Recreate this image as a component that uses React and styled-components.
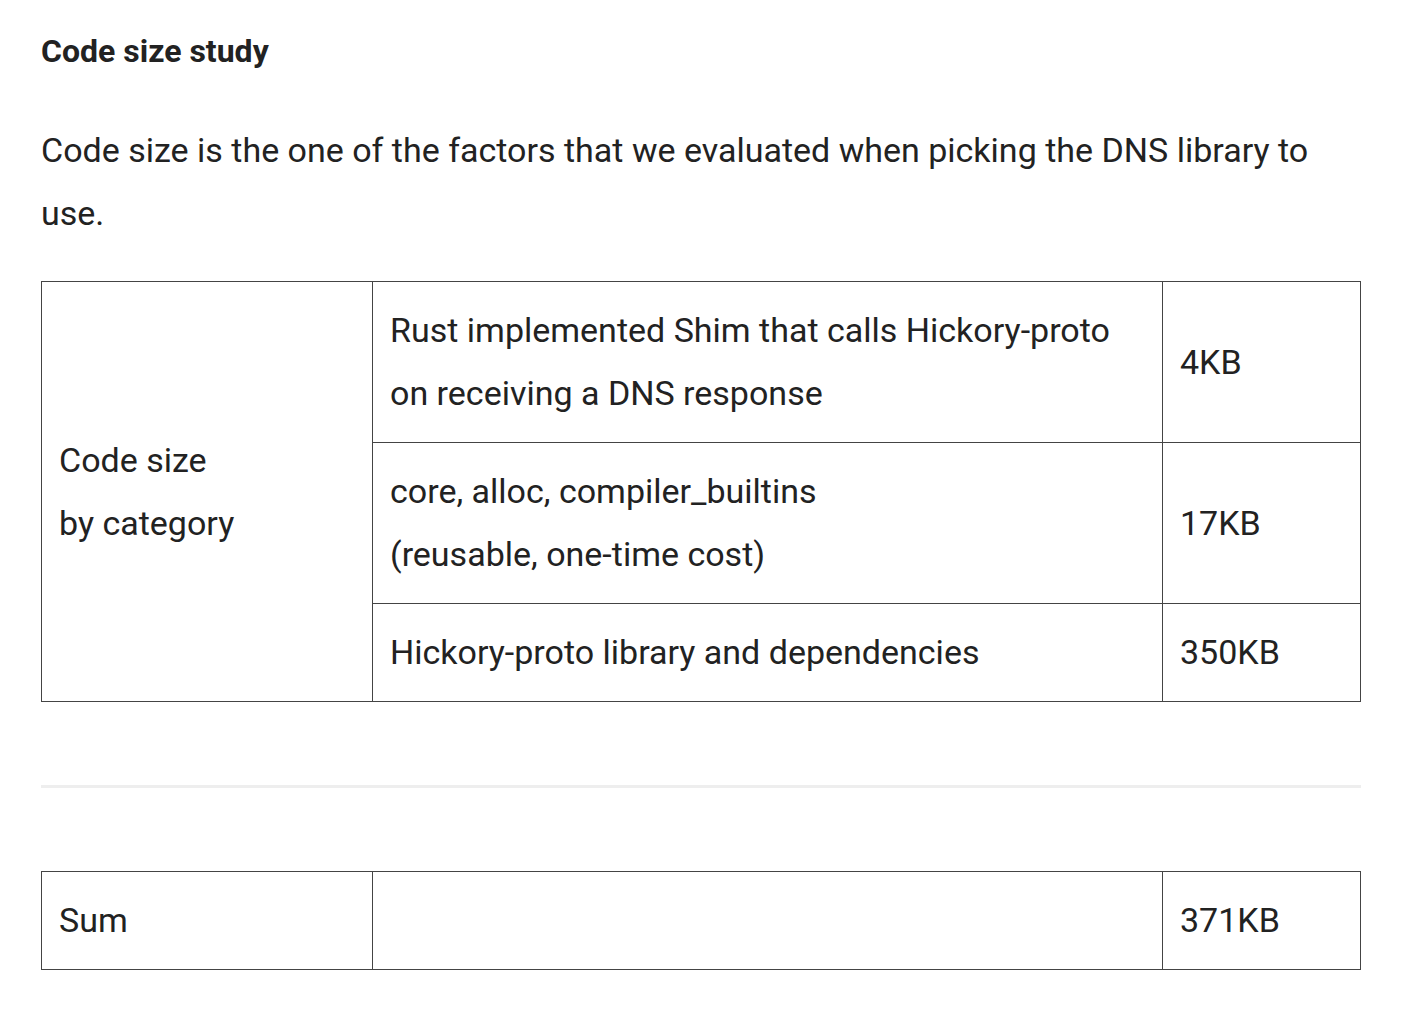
import styled, { createGlobalStyle } from "styled-components";

const GlobalStyle = createGlobalStyle`
  body {
    margin: 0;
    background: #ffffff;
    font-family: Roboto, "Noto Sans", sans-serif;
    color: #222222;
  }
`;

const rows = [
  {
    item: ["Rust implemented Shim that calls Hickory-proto", "on receiving a DNS response"],
    size: "4KB",
  },
  {
    item: ["core, alloc, compiler_builtins", "(reusable, one-time cost)"],
    size: "17KB",
  },
  {
    item: ["Hickory-proto library and dependencies"],
    size: "350KB",
  },
];

const Columns = () => (
  <colgroup>
    <col style={{ width: 331 }} />
    <col style={{ width: 790 }} />
    <col />
  </colgroup>
);

const App = () => {
  return (
    <Page>
      <GlobalStyle />
      <Heading>Code size study</Heading>
      <Paragraph>
        Code size is the one of the factors that we evaluated when picking the DNS library to use.
      </Paragraph>

      {/* BREAKDOWN TABLE */}
      <Table>
        <Columns />
        <tbody>
          {rows.map((row, i) => (
            <tr key={row.size}>
              {i === 0 && (
                <Cell rowSpan={rows.length}>
                  Code size
                  <br />
                  by category
                </Cell>
              )}
              <Cell>
                {row.item.map((line, j) => (
                  <span key={line}>
                    {j > 0 && <br />}
                    {line}
                  </span>
                ))}
              </Cell>
              <Cell>{row.size}</Cell>
            </tr>
          ))}
        </tbody>
      </Table>

      <Divider />

      {/* SUM TABLE */}
      <Table>
        <Columns />
        <tbody>
          <tr>
            <Cell>Sum</Cell>
            <Cell />
            <Cell>371KB</Cell>
          </tr>
        </tbody>
      </Table>
    </Page>
  );
};

const Page = styled.div`
  width: 1320px;
  padding: 20px 0 40px 41px;
`;

const Heading = styled.h3`
  margin: 0;
  font-size: 32px;
  font-weight: 700;
  line-height: 63px;
`;

const Paragraph = styled.p`
  margin: 36px 0 36px;
  font-size: 34px;
  line-height: 63px;
`;

const Table = styled.table`
  width: 1320px;
  border-collapse: collapse;
  table-layout: fixed;
  border: 1px solid #444;
`;

const Cell = styled.td`
  border: 1px solid #444;
  padding: 17px 17px;
  font-size: 34px;
  line-height: 63px;
  vertical-align: middle;
`;

const Divider = styled.div`
  height: 3px;
  background: #eeeeee;
  margin: 83px 0;
`;

export default App;
